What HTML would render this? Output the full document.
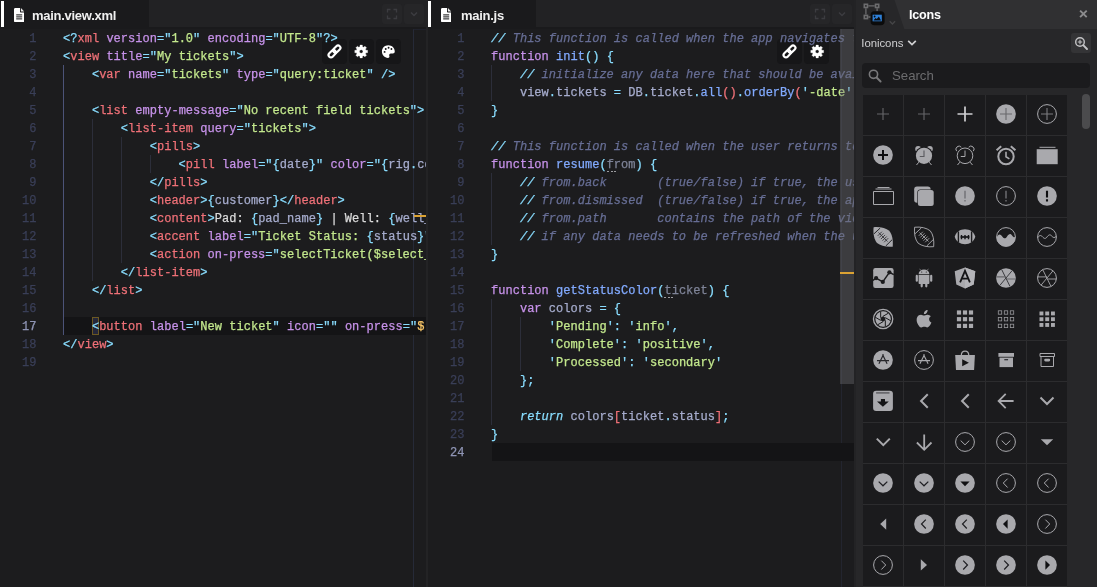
<!DOCTYPE html>
<html>
<head>
<meta charset="utf-8">
<title>Editor</title>
<style>
*{box-sizing:border-box;margin:0;padding:0}
html,body{width:1097px;height:587px;overflow:hidden;background:#232325;font-family:"Liberation Sans",sans-serif}
.pane{position:absolute;top:0;height:587px;width:426px;background:#1c1c1e;overflow:hidden}
#p1{left:0}
#p2{left:428px}
.tabbar{position:absolute;left:0;top:0;width:100%;height:28.5px;background:#1a1a1c}
.tabbar .rest{position:absolute;top:0;right:0;height:27px;background:#222224}
.tab{position:absolute;left:0;top:0;height:27px}
.tab .bar{position:absolute;left:1px;top:1px;width:3px;height:26px;background:#fff}
#p2 .tab .bar{left:0}
.tab svg.fi{position:absolute;left:13.8px;top:7.600px;width:10.300px;height:14.400px}
.tab .tl{position:absolute;left:32px;top:7.5px;font-size:13px;font-weight:bold;color:#f0f0f0;white-space:nowrap;letter-spacing:-0.28px}
.tbtn{position:absolute;top:4px;width:20px;height:20px;border-radius:3px;background:#262628}
.tbtn svg{position:absolute;left:0;top:0;width:20px;height:20px}
.code{position:absolute;z-index:2;left:0;top:30px;width:100%;font-family:"Liberation Mono",monospace;font-size:12px;letter-spacing:0.024px;line-height:18px;color:#d6d6d6;white-space:pre;-webkit-text-stroke:0.25px}
.ln{position:absolute;left:0;width:36.5px;text-align:right;color:#3a3f58;height:18px}
.ln.act{color:#8f95b5}
.l{position:absolute;left:63px;height:18px}
.hl{position:absolute;left:64px;right:0;height:18px;background:#141416;margin-top:-1px}
.ig{position:absolute;width:1px;background:#2c2e3a;margin-top:-1px}
.ig.a{background:#4c5378}
.fb{position:absolute;top:39px;width:24.6px;height:24.6px;border-radius:4px;background:#161618}
.fb svg{position:absolute;left:4.3px;top:4.300px;width:16px;height:16px}
.ruler{position:absolute;right:0;top:27px;width:13px;bottom:0}
.code,.tab .tl,#panel{will-change:transform}
/* syntax */
.p{color:#89ddff}.t{color:#f07178}.a{color:#c792ea}.s{color:#c3e88d}.v{color:#a6accd}.w{color:#dcdcdc}
.o{color:#ffcb6b}.c{color:#676e95;font-style:italic}.ci{color:#89ddff;font-style:italic}.k{color:#c792ea}.ki{color:#89ddff;font-style:italic}
.f{color:#82aaff}.r{color:#f07178}.n{color:#a6accd}.u{color:#7f8498}
.ud{position:relative}.ud:after{content:'';position:absolute;left:0;top:12.500px;width:9.200px;height:1.700px;background:repeating-linear-gradient(90deg,#9c9ca0 0,#9c9ca0 2px,transparent 2px,transparent 3.600px)}
/* panel */
#panel{position:absolute;left:856px;top:0;width:241px;height:587px;background:#272729;overflow:hidden}
#pin{position:absolute;left:.5px;top:0;width:240.500px;height:587px}
#phead{position:absolute;left:0;top:0;width:100%;height:29px;background:#303032}
.cell{position:absolute;width:40px;height:40px;background:#1b1b1d}
.cell svg{position:absolute;left:8px;top:7px;width:24px;height:24px}
</style>
</head>
<body>
<div class="pane" id="p1">
  <div class="tabbar">
    <div class="tab" style="width:149px"><div class="bar"></div>
      <svg class="fi" viewBox="0 0 10.300 14.400"><path d="M0 1.300C0 .6.600 0 1.300 0H6v3.400c0 .6.400 1 1 1h3.300v8.700c0 .7-.6 1.300-1.300 1.300H1.300C.6 14.400 0 13.800 0 13.100z" fill="#fff"/><path d="M6.900 0l3.400 3.500H7.500c-.3 0-.6-.3-.6-.6z" fill="#e8e8e8"/><rect x="2.200" y="6.400" width="6" height="1" fill="#101012"/><rect x="2.200" y="8.400" width="6" height="1" fill="#101012"/><rect x="2.200" y="10.400" width="6" height="1" fill="#101012"/></svg>
      <div class="tl">main.view.xml</div></div>
    <div class="rest" style="left:149px"></div>
    <div class="tbtn" style="left:382px"><svg viewBox="0 0 20 20"><path d="M5.500 8.500v-3h3M11.500 5.500h3v3M14.500 11.500v3h-3M8.500 14.500h-3v-3" fill="none" stroke="#3c3c40" stroke-width="1.300"/></svg></div>
    <div class="tbtn" style="left:404px"><svg viewBox="0 0 20 20"><path d="M7 8.500l3 3 3-3" fill="none" stroke="#3c3c40" stroke-width="1.500"/></svg></div>
  </div>
  <div class="code" id="c1">
<div class="hl" style="top:288px"></div>
<div style="position:absolute;left:92px;top:287px;width:7px;height:18px;border:1px solid #6b5822;background:#25273a"></div>
<div class="ig a" style="left:63.0px;top:36px;height:270px"></div>
<div class="ig" style="left:91.9px;top:90px;height:162px"></div>
<div class="ig" style="left:120.8px;top:108px;height:126px"></div>
<div class="ig" style="left:149.7px;top:126px;height:18px"></div>
<div class="ln" style="top:0px">1</div>
<div class="l" style="top:0px"><span class="p">&lt;?</span><span class="t">xml</span> <span class="a">version</span><span class="p">=&quot;</span><span class="s">1.0</span><span class="p">&quot;</span> <span class="a">encoding</span><span class="p">=&quot;</span><span class="s">UTF-8</span><span class="p">&quot;?&gt;</span></div>
<div class="ln" style="top:18px">2</div>
<div class="l" style="top:18px"><span class="p">&lt;</span><span class="t">view</span> <span class="a">title</span><span class="p">=&quot;</span><span class="s">My tickets</span><span class="p">&quot;&gt;</span></div>
<div class="ln" style="top:36px">3</div>
<div class="l" style="top:36px">    <span class="p">&lt;</span><span class="t">var</span> <span class="a">name</span><span class="p">=&quot;</span><span class="s">tickets</span><span class="p">&quot;</span> <span class="a">type</span><span class="p">=&quot;</span><span class="s">query:ticket</span><span class="p">&quot;</span> <span class="p">/&gt;</span></div>
<div class="ln" style="top:54px">4</div>
<div class="ln" style="top:72px">5</div>
<div class="l" style="top:72px">    <span class="p">&lt;</span><span class="t">list</span> <span class="a">empty-message</span><span class="p">=&quot;</span><span class="s">No recent field tickets</span><span class="p">&quot;&gt;</span></div>
<div class="ln" style="top:90px">6</div>
<div class="l" style="top:90px">        <span class="p">&lt;</span><span class="t">list-item</span> <span class="a">query</span><span class="p">=&quot;</span><span class="s">tickets</span><span class="p">&quot;&gt;</span></div>
<div class="ln" style="top:108px">7</div>
<div class="l" style="top:108px">            <span class="p">&lt;</span><span class="t">pills</span><span class="p">&gt;</span></div>
<div class="ln" style="top:126px">8</div>
<div class="l" style="top:126px">                <span class="p">&lt;</span><span class="t">pill</span> <span class="a">label</span><span class="p">=&quot;{</span><span class="v">date</span><span class="p">}&quot;</span> <span class="a">color</span><span class="p">=&quot;{</span><span class="v">rig</span><span class="p">.</span><span class="v">color</span><span class="p">}&quot;</span> <span class="p">/&gt;</span></div>
<div class="ln" style="top:144px">9</div>
<div class="l" style="top:144px">            <span class="p">&lt;/</span><span class="t">pills</span><span class="p">&gt;</span></div>
<div class="ln" style="top:162px">10</div>
<div class="l" style="top:162px">            <span class="p">&lt;</span><span class="t">header</span><span class="p">&gt;{</span><span class="v">customer</span><span class="p">}&lt;/</span><span class="t">header</span><span class="p">&gt;</span></div>
<div class="ln" style="top:180px">11</div>
<div class="l" style="top:180px">            <span class="p">&lt;</span><span class="t">content</span><span class="p">&gt;</span><span class="w">Pad: </span><span class="p">{</span><span class="v">pad_name</span><span class="p">}</span><span class="w"> | Well: </span><span class="p">{</span><span class="v">well_name</span><span class="p">}&lt;/</span><span class="t">content</span><span class="p">&gt;</span></div>
<div class="ln" style="top:198px">12</div>
<div class="l" style="top:198px">            <span class="p">&lt;</span><span class="t">accent</span> <span class="a">label</span><span class="p">=&quot;</span><span class="s">Ticket Status: </span><span class="p">{</span><span class="v">status</span><span class="p">}&quot;</span> <span class="a">color</span><span class="p">=&quot;{</span><span class="v">getStatusColor</span><span class="p">}&quot;</span></div>
<div class="ln" style="top:216px">13</div>
<div class="l" style="top:216px">            <span class="p">&lt;</span><span class="t">action</span> <span class="a">on-press</span><span class="p">=&quot;</span><span class="s">selectTicket($select_id)</span><span class="p">&quot;</span> <span class="p">/&gt;</span></div>
<div class="ln" style="top:234px">14</div>
<div class="l" style="top:234px">        <span class="p">&lt;/</span><span class="t">list-item</span><span class="p">&gt;</span></div>
<div class="ln" style="top:252px">15</div>
<div class="l" style="top:252px">    <span class="p">&lt;/</span><span class="t">list</span><span class="p">&gt;</span></div>
<div class="ln" style="top:270px">16</div>
<div class="ln act" style="top:288px">17</div>
<div class="l" style="top:288px">    <span class="p">&lt;</span><span class="t">button</span> <span class="a">label</span><span class="p">=&quot;</span><span class="s">New ticket</span><span class="p">&quot;</span> <span class="a">icon</span><span class="p">=&quot;&quot;</span> <span class="a">on-press</span><span class="p">=&quot;</span><span class="o">$</span><span class="s">.open(&#x27;new&#x27;)</span><span class="p">&quot;</span> <span class="p">/&gt;</span></div>
<div class="ln" style="top:306px">18</div>
<div class="l" style="top:306px"><span class="p">&lt;/</span><span class="t">view</span><span class="p">&gt;</span></div>
<div class="ln" style="top:324px">19</div>
</div>
<div class="ruler" style="border-left:1px solid #262a38;border-top:1px solid #20222c;top:28.500px"></div>
<div style="position:absolute;z-index:4;left:414px;top:215px;width:12px;height:2px;background:#dba233"></div>
<div class="fb" style="left:322.1px"><svg viewBox="0 0 16 16"><g transform="translate(.5 .4) rotate(-45 8 8)" fill="none" stroke="#fff" stroke-width="2.100"><rect x="0.600" y="5.600" width="8.400" height="4.800" rx="2.400"/><rect x="7" y="5.600" width="8.400" height="4.800" rx="2.400"/></g></svg></div><div class="fb" style="left:349.2px"><svg viewBox="0 0 16 16"><path fill-rule="evenodd" fill="#fff" stroke="#fff" stroke-width=".35" stroke-linejoin="round" d="M6.94 3.76 L7.03 2.11 L9.37 2.11 L9.46 3.76 L10.66 4.26 L11.90 3.15 L13.55 4.80 L12.44 6.04 L12.94 7.24 L14.59 7.33 L14.59 9.67 L12.94 9.76 L12.44 10.96 L13.55 12.20 L11.90 13.85 L10.66 12.74 L9.46 13.24 L9.37 14.89 L7.03 14.89 L6.94 13.24 L5.74 12.74 L4.50 13.85 L2.85 12.20 L3.96 10.96 L3.46 9.76 L1.81 9.67 L1.81 7.33 L3.46 7.24 L3.96 6.04 L2.85 4.80 L4.50 3.15 L5.74 4.26Z M6.40 8.50 a1.80 1.80 0 1 0 3.60 0 a1.80 1.80 0 1 0 -3.60 0Z"/></svg></div><div class="fb" style="left:376.3px"><svg viewBox="0 0 16 16"><g transform="translate(7.300 8.600) scale(.95) translate(-8 -8)"><path fill="#fff" d="M8 1.300C4.100 1.300 1.300 4.300 1.300 8c0 3.700 2.900 6.700 6.300 6.700 1.300 0 1.900-1.100 1.500-2.100-.5-1.300.1-2.700 1.700-2.700h2c1.200 0 2-.8 2-2C14.800 4.300 11.900 1.300 8 1.300z"/><g fill="#161618"><circle cx="4.100" cy="8.300" r="1"/><circle cx="5.300" cy="5.200" r="1"/><circle cx="8.300" cy="3.900" r="1"/><circle cx="11.300" cy="5.300" r="1"/></g></g></svg></div>
</div>
<div class="pane" id="p2">
  <div class="tabbar">
    <div class="tab" style="width:108px"><div class="bar"></div>
      <svg class="fi" style="left:12.800px" viewBox="0 0 10.300 14.400"><path d="M0 1.300C0 .6.600 0 1.300 0H6v3.400c0 .6.400 1 1 1h3.300v8.700c0 .7-.6 1.300-1.300 1.300H1.300C.6 14.400 0 13.800 0 13.100z" fill="#fff"/><path d="M6.900 0l3.400 3.500H7.500c-.3 0-.6-.3-.6-.6z" fill="#e8e8e8"/><rect x="2.200" y="6.400" width="6" height="1" fill="#101012"/><rect x="2.200" y="8.400" width="6" height="1" fill="#101012"/><rect x="2.200" y="10.400" width="6" height="1" fill="#101012"/></svg>
      <div class="tl" style="left:33px">main.js</div></div>
    <div class="rest" style="left:108px"></div>
    <div class="tbtn" style="left:382px"><svg viewBox="0 0 20 20"><path d="M5.500 8.500v-3h3M11.500 5.500h3v3M14.500 11.500v3h-3M8.500 14.500h-3v-3" fill="none" stroke="#3c3c40" stroke-width="1.300"/></svg></div>
    <div class="tbtn" style="left:404px"><svg viewBox="0 0 20 20"><path d="M7 8.500l3 3 3-3" fill="none" stroke="#3c3c40" stroke-width="1.500"/></svg></div>
  </div>
  <div class="code" id="c2">
<div class="hl" style="top:414px"></div>

<div class="ig" style="left:63.0px;top:36px;height:36px"></div>
<div class="ig" style="left:63.0px;top:144px;height:72px"></div>
<div class="ig" style="left:63.0px;top:270px;height:126px"></div>
<div class="ig" style="left:91.9px;top:288px;height:54px"></div>
<div class="ln" style="top:0px">1</div>
<div class="l" style="top:0px"><span class="ci">//</span><span class="c"> This function is called when the app navigates to this view</span></div>
<div class="ln" style="top:18px">2</div>
<div class="l" style="top:18px"><span class="k">function</span> <span class="f">init</span><span class="p">()</span> <span class="p">{</span></div>
<div class="ln" style="top:36px">3</div>
<div class="l" style="top:36px">    <span class="ci">//</span><span class="c"> initialize any data here that should be available</span></div>
<div class="ln" style="top:54px">4</div>
<div class="l" style="top:54px">    <span class="n">view</span><span class="p">.</span><span class="n">tickets</span><span class="p"> = </span><span class="n">DB</span><span class="p">.</span><span class="n">ticket</span><span class="p">.</span><span class="f">all</span><span class="r">()</span><span class="p">.</span><span class="f">orderBy</span><span class="r">(</span><span class="p">&#x27;</span><span class="s">-date</span><span class="p">&#x27;</span><span class="r">)</span><span class="p">;</span></div>
<div class="ln" style="top:72px">5</div>
<div class="l" style="top:72px"><span class="p">}</span></div>
<div class="ln" style="top:90px">6</div>
<div class="ln" style="top:108px">7</div>
<div class="l" style="top:108px"><span class="ci">//</span><span class="c"> This function is called when the user returns to this view</span></div>
<div class="ln" style="top:126px">8</div>
<div class="l" style="top:126px"><span class="k">function</span> <span class="f">resume</span><span class="p">(</span><span class="u ud">from</span><span class="p">)</span> <span class="p">{</span></div>
<div class="ln" style="top:144px">9</div>
<div class="l" style="top:144px">    <span class="ci">//</span><span class="c"> from.back       (true/false) if true, the user pressed back</span></div>
<div class="ln" style="top:162px">10</div>
<div class="l" style="top:162px">    <span class="ci">//</span><span class="c"> from.dismissed  (true/false) if true, the app was dismissed</span></div>
<div class="ln" style="top:180px">11</div>
<div class="l" style="top:180px">    <span class="ci">//</span><span class="c"> from.path       contains the path of the view that was left</span></div>
<div class="ln" style="top:198px">12</div>
<div class="l" style="top:198px">    <span class="ci">//</span><span class="c"> if any data needs to be refreshed when the user returns</span></div>
<div class="ln" style="top:216px">13</div>
<div class="l" style="top:216px"><span class="p">}</span></div>
<div class="ln" style="top:234px">14</div>
<div class="ln" style="top:252px">15</div>
<div class="l" style="top:252px"><span class="k">function</span> <span class="f">getStatusColor</span><span class="p">(</span><span class="u ud">ticket</span><span class="p">)</span> <span class="p">{</span></div>
<div class="ln" style="top:270px">16</div>
<div class="l" style="top:270px">    <span class="k">var</span> <span class="n">colors</span><span class="p"> = {</span></div>
<div class="ln" style="top:288px">17</div>
<div class="l" style="top:288px">        <span class="p">&#x27;</span><span class="s">Pending</span><span class="p">&#x27;: &#x27;</span><span class="s">info</span><span class="p">&#x27;,</span></div>
<div class="ln" style="top:306px">18</div>
<div class="l" style="top:306px">        <span class="p">&#x27;</span><span class="s">Complete</span><span class="p">&#x27;: &#x27;</span><span class="s">positive</span><span class="p">&#x27;,</span></div>
<div class="ln" style="top:324px">19</div>
<div class="l" style="top:324px">        <span class="p">&#x27;</span><span class="s">Processed</span><span class="p">&#x27;: &#x27;</span><span class="s">secondary</span><span class="p">&#x27;</span></div>
<div class="ln" style="top:342px">20</div>
<div class="l" style="top:342px">    <span class="p">};</span></div>
<div class="ln" style="top:360px">21</div>
<div class="ln" style="top:378px">22</div>
<div class="l" style="top:378px">    <span class="ki">return</span> <span class="n">colors</span><span class="r">[</span><span class="n">ticket</span><span class="p">.</span><span class="n">status</span><span class="r">]</span><span class="p">;</span></div>
<div class="ln" style="top:396px">23</div>
<div class="l" style="top:396px"><span class="p">}</span></div>
<div class="ln act" style="top:414px">24</div>
</div>
<div class="ruler" style="border-left:1px solid #23252f;top:28.500px"></div>
<div style="position:absolute;z-index:3;left:412px;top:29px;width:14px;height:355px;background:rgba(110,110,112,.4)"></div>
<div style="position:absolute;z-index:4;left:412px;top:272px;width:14px;height:2px;background:#dba233"></div>
<div class="fb" style="left:349.2px"><svg viewBox="0 0 16 16"><g transform="translate(.5 .4) rotate(-45 8 8)" fill="none" stroke="#fff" stroke-width="2.100"><rect x="0.600" y="5.600" width="8.400" height="4.800" rx="2.400"/><rect x="7" y="5.600" width="8.400" height="4.800" rx="2.400"/></g></svg></div><div class="fb" style="left:376.3px"><svg viewBox="0 0 16 16"><path fill-rule="evenodd" fill="#fff" stroke="#fff" stroke-width=".35" stroke-linejoin="round" d="M6.94 3.76 L7.03 2.11 L9.37 2.11 L9.46 3.76 L10.66 4.26 L11.90 3.15 L13.55 4.80 L12.44 6.04 L12.94 7.24 L14.59 7.33 L14.59 9.67 L12.94 9.76 L12.44 10.96 L13.55 12.20 L11.90 13.85 L10.66 12.74 L9.46 13.24 L9.37 14.89 L7.03 14.89 L6.94 13.24 L5.74 12.74 L4.50 13.85 L2.85 12.20 L3.96 10.96 L3.46 9.76 L1.81 9.67 L1.81 7.33 L3.46 7.24 L3.96 6.04 L2.85 4.80 L4.50 3.15 L5.74 4.26Z M6.40 8.50 a1.80 1.80 0 1 0 3.60 0 a1.80 1.80 0 1 0 -3.60 0Z"/></svg></div>
</div>
<div id="panel"><div id="pin">
  <div id="phead">
    <svg style="position:absolute;left:0;top:0" width="241" height="29" viewBox="0 0 241 29">
      <polygon points="0,0 37.500,0 47.300,29 0,29" fill="#272729"/>
      <g fill="none" stroke="#6c6c6e" stroke-width="1.600">
        <rect x="7.300" y="4.300" width="3.200" height="3.200"/><rect x="18.500" y="4.300" width="3.200" height="3.200"/><rect x="7.300" y="15.400" width="3.200" height="3.200"/>
        <path d="M11.300 5.900h6.400M8.900 8.300v6.300M20.100 8.300v3M11.300 17h2.500" stroke-width="1.300"/>
      </g>
      <rect x="13.600" y="11.200" width="14" height="14" rx="3.800" fill="#0b0b0b"/>
      <rect x="15.600" y="14.700" width="9.200" height="6.600" fill="#2f80d8"/>
      <path d="M16.400 20.400l2.200-2.300 1.200 1 2.100-2.600 2.100 3.900z" fill="#0b0b0b"/><circle cx="17.600" cy="16.500" r=".9" fill="#0b0b0b"/>
      <path d="M32.700 21.300l2.700 2.700 2.700-2.700" fill="none" stroke="#454547" stroke-width="1.300"/>
      <path d="M223.100 10.600l6.600 6.600M229.700 10.600l-6.600 6.600" stroke="#8c8c8e" stroke-width="1.900"/>
    </svg>
    <div style="position:absolute;left:52.500px;top:8px;font-size:12.600px;font-weight:bold;color:#fff;letter-spacing:-0.25px">Icons</div>
</div>
<div style="position:absolute;left:4.800px;top:37px;font-size:11.400px;color:#cfcfd1;letter-spacing:-0.05px">Ionicons</div>
<svg style="position:absolute;left:50.500px;top:39px" width="10" height="8" viewBox="0 0 10 8"><path d="M1.200 1.800l3.800 3.800 3.800-3.800" fill="none" stroke="#cfcfd1" stroke-width="1.700"/></svg>
<div style="position:absolute;left:214.500px;top:33px;width:20px;height:20px;border-radius:3px;background:#343436">
  <svg width="20" height="20" viewBox="0 0 20 20"><circle cx="9" cy="9" r="4.300" fill="none" stroke="#c4c4c6" stroke-width="1.400"/><path d="M12.200 12.200l3.800 3.800" stroke="#c4c4c6" stroke-width="1.900" stroke-linecap="round"/><path d="M6.800 9h4.400M9 6.800v4.400" stroke="#c4c4c6" stroke-width="1.100"/></svg>
</div>
<div style="position:absolute;left:5.500px;top:63px;width:227.600px;height:25px;border-radius:4px;background:#1b1b1d">
  <svg style="position:absolute;left:5px;top:5px" width="16" height="16" viewBox="0 0 16 16"><circle cx="6.500" cy="6.300" r="4.100" fill="none" stroke="#79797b" stroke-width="1.600"/><path d="M9.600 9.500l4 4" stroke="#79797b" stroke-width="1.900" stroke-linecap="round"/></svg>
  <div style="position:absolute;left:30px;top:5px;font-size:13.200px;color:#6c6c6e">Search</div>
</div>
<div id="grid" style="position:absolute;left:6.500px;top:95px;width:204px;height:492px;background:#2c2c2e">
<div class="cell" style="left:0px;top:0px"><svg viewBox="0 0 24 24"><path d="M12 6v12M6 12h12" fill="none" stroke="#66666a" stroke-width="1.1" /></svg></div>
<div class="cell" style="left:41px;top:0px"><svg viewBox="0 0 24 24"><path d="M12 6v12M6 12h12" fill="none" stroke="#66666a" stroke-width="1.1" /></svg></div>
<div class="cell" style="left:82px;top:0px"><svg viewBox="0 0 24 24"><path d="M12 4.500v15M4.500 12h15" fill="none" stroke="#cfcfd2" stroke-width="1.7" /></svg></div>
<div class="cell" style="left:123px;top:0px"><svg viewBox="0 0 24 24"><circle cx="12" cy="12" r="9.85" fill="#a9a9ad"/><path d="M12 6v12M6 12h12" fill="none" stroke="#68686c" stroke-width="1.1" /></svg></div>
<div class="cell" style="left:164px;top:0px"><svg viewBox="0 0 24 24"><circle cx="12" cy="12" r="9.4" fill="none" stroke="#a9a9ad" stroke-width="1"/><path d="M12 6v12M6 12h12" fill="none" stroke="#7c7c80" stroke-width="1.1" /></svg></div>
<div class="cell" style="left:0px;top:41px"><svg viewBox="0 0 24 24"><circle cx="12" cy="12" r="9.85" fill="#a9a9ad"/><path d="M12 7v10M7 12h10" fill="none" stroke="#0e0e10" stroke-width="2" /></svg></div>
<div class="cell" style="left:41px;top:41px"><svg viewBox="0 0 24 24"><circle cx="6.200" cy="6" r="3" fill="#a9a9ad"/><circle cx="17.800" cy="6" r="3" fill="#a9a9ad"/><circle cx="12" cy="12.800" r="9.300" fill="#1b1b1d"/><circle cx="12" cy="12.800" r="8.100" fill="#a9a9ad"/><path d="M6.800 19.200l-2.300 2.800M17.200 19.200l2.300 2.800" fill="none" stroke="#a9a9ad" stroke-width="1" /><path d="M12 7.500v6h-4.200" fill="none" stroke="#5a5a5e" stroke-width="1.1" /></svg></div>
<div class="cell" style="left:82px;top:41px"><svg viewBox="0 0 24 24"><path d="M3.700 8.200A3 3 0 0 1 8.300 4.200M20.300 8.200A3 3 0 0 0 15.700 4.200" fill="none" stroke="#a9a9ad" stroke-width="1" /><circle cx="12" cy="12.800" r="7.800" fill="none" stroke="#a9a9ad" stroke-width="1"/><path d="M6.800 19.200l-2.300 2.800M17.200 19.200l2.300 2.800" fill="none" stroke="#a9a9ad" stroke-width="1" /><path d="M12 7.500v6h-4.200" fill="none" stroke="#a9a9ad" stroke-width="1" /></svg></div>
<div class="cell" style="left:123px;top:41px"><svg viewBox="0 0 24 24"><circle cx="12" cy="13.500" r="7.700" fill="none" stroke="#a9a9ad" stroke-width="2"/><path d="M12 8.800v5l3.400 2.100" fill="none" stroke="#a9a9ad" stroke-width="1.6" /><path d="M2.600 7.300l4.600-4M21.400 7.300l-4.600-4" fill="none" stroke="#a9a9ad" stroke-width="2.1" /></svg></div>
<div class="cell" style="left:164px;top:41px"><svg viewBox="0 0 24 24"><path d="M1.700 6.200h21v15h-21z" fill="#a9a9ad" /><path d="M4.500 4.300h16" fill="none" stroke="#a9a9ad" stroke-width="1" /></svg></div>
<div class="cell" style="left:0px;top:82px"><svg viewBox="0 0 24 24"><path d="M2.500 7.500h20v13h-20z" fill="none" stroke="#a9a9ad" stroke-width="1" /><path d="M4.500 5h16M6.500 3.500h12" fill="none" stroke="#a9a9ad" stroke-width="1" /></svg></div>
<div class="cell" style="left:41px;top:82px"><svg viewBox="0 0 24 24"><rect x="2.200" y="2.400" width="16.400" height="16.400" rx="2.800" fill="#a9a9ad"/><rect x="5.300" y="5.500" width="17" height="17" rx="3" fill="#1b1b1d"/><rect x="5.900" y="6.100" width="15.800" height="15.800" rx="2.500" fill="#a9a9ad"/></svg></div>
<div class="cell" style="left:82px;top:82px"><svg viewBox="0 0 24 24"><circle cx="12" cy="12" r="9.85" fill="#a9a9ad"/><path d="M12 6.800v7.600M12 16v1.400" fill="none" stroke="#606064" stroke-width="1.1" /></svg></div>
<div class="cell" style="left:123px;top:82px"><svg viewBox="0 0 24 24"><circle cx="12" cy="12" r="9.4" fill="none" stroke="#a9a9ad" stroke-width="1"/><path d="M12 6.800v7.600M12 16v1.400" fill="none" stroke="#88888c" stroke-width="1.1" /></svg></div>
<div class="cell" style="left:164px;top:82px"><svg viewBox="0 0 24 24"><circle cx="12" cy="12" r="9.85" fill="#a9a9ad"/><path d="M12 6.800v6.800M12 15.300v2.100" fill="none" stroke="#0e0e10" stroke-width="2.1" /></svg></div>
<div class="cell" style="left:0px;top:123px"><svg viewBox="0 0 24 24"><g transform="translate(12 12) scale(.94) translate(-12 -12)"><path d="M2 1.600C8.500 .9 15 2.400 18.600 5.400C21.700 9 23 15.600 22.300 22.300C15.800 23 9.300 21.500 5.700 18.500C2.600 14.900 1.300 8.300 2 1.600z" fill="#a9a9ad" /><path d="M7.200 7.200l9.600 9.600M6.4 10.8l4.400-4.400M8.1 12.5l4.400-4.400M9.8 14.2l4.400-4.400M11.5 15.9l4.400-4.400M13.2 17.6l4.400-4.400" fill="none" stroke="#3a3a3e" stroke-width="1" /><path d="M2.400 8.600L9 2.500M15 21.500l6.700-6.600" fill="none" stroke="#1b1b1d" stroke-width="1" /></g></svg></div>
<div class="cell" style="left:41px;top:123px"><svg viewBox="0 0 24 24"><g transform="translate(12 12) scale(.94) translate(-12 -12)"><path d="M2 1.600C8.500 .9 15 2.400 18.600 5.400C21.700 9 23 15.600 22.300 22.300C15.800 23 9.300 21.500 5.700 18.500C2.600 14.900 1.300 8.300 2 1.600z" fill="none" stroke="#a9a9ad" stroke-width="1" /><path d="M7.200 7.200l9.600 9.600M6.4 10.8l4.400-4.400M8.1 12.5l4.400-4.400M9.8 14.2l4.400-4.400M11.5 15.9l4.400-4.400M13.2 17.6l4.400-4.400" fill="none" stroke="#a9a9ad" stroke-width="0.9" /><path d="M2.400 8.600L9 2.500M15 21.500l6.700-6.600" fill="none" stroke="#a9a9ad" stroke-width="1" /></g></svg></div>
<div class="cell" style="left:82px;top:123px"><svg viewBox="0 0 24 24"><path d="M1.700 11.800C3.200 7 7 4.300 12 4.300S20.800 7 22.300 11.800C20.800 16.500 17 19.300 12 19.300S3.200 16.500 1.700 11.800z" fill="#a9a9ad" /><path d="M7.600 12h8.800" fill="none" stroke="#141416" stroke-width="1.7" /><path d="M8.500 9.900v4.300M12 9.900v4.300M15.500 9.900v4.300" fill="none" stroke="#141416" stroke-width="1.4" /><path d="M5.400 6.500v11M18.600 6.500v11" fill="none" stroke="#1b1b1d" stroke-width="1.4" /></svg></div>
<div class="cell" style="left:123px;top:123px"><svg viewBox="0 0 24 24"><circle cx="12" cy="12" r="9.4" fill="none" stroke="#a9a9ad" stroke-width="1"/><clipPath id="cw"><circle cx="12" cy="12" r="9.600"/></clipPath><path d="M2.600 12.500c1.600-3.400 3.600-4 5.300-1.500s3.200 3.300 5 .8 3.200-3.800 5-1.600 2.400 2.800 3.500 1.300V23H2z" fill="#a9a9ad" clip-path="url(#cw)"/></svg></div>
<div class="cell" style="left:164px;top:123px"><svg viewBox="0 0 24 24"><circle cx="12" cy="12" r="9.4" fill="none" stroke="#a9a9ad" stroke-width="1"/><path d="M2.800 12.700c1.400-2.400 3-2.900 4.600-1s3 2.500 4.600.3 3-2.900 4.600-1.100 2.800 2.300 4.600.5" fill="none" stroke="#a9a9ad" stroke-width="1" /></svg></div>
<div class="cell" style="left:0px;top:164px"><svg viewBox="0 0 24 24"><rect x="2.200" y="2" width="20.400" height="20" rx="2.200" fill="#a9a9ad"/><path d="M1.900 14.400l3.200-2.300 6.700 3.800 6.600-9.600 4.400 2.400" fill="none" stroke="#1b1b1d" stroke-width="1.5" stroke-linejoin="round"/><circle cx="5.100" cy="12.100" r="2.100" fill="#1b1b1d"/><circle cx="11.800" cy="15.900" r="2.100" fill="#1b1b1d"/><circle cx="18.400" cy="6.300" r="2.100" fill="#1b1b1d"/></svg></div>
<div class="cell" style="left:41px;top:164px"><svg viewBox="0 0 24 24"><path d="M6.600 8.200a5.400 4.800 0 0 1 10.800 0z" fill="#a9a9ad" /><path d="M8.600 4.200l-.9-1.400M15.400 4.200l.9-1.400" fill="none" stroke="#a9a9ad" stroke-width="0.6" /><circle cx="9.700" cy="6" r=".6" fill="#1b1b1d"/><circle cx="14.300" cy="6" r=".6" fill="#1b1b1d"/><path d="M6.600 8.900h10.800v8c0 .6-.4 1-1 1H7.600c-.6 0-1-.4-1-1z" fill="#a9a9ad"/><rect x="3.700" y="8.800" width="2.200" height="7" rx="1.100" fill="#a9a9ad"/><rect x="18.100" y="8.800" width="2.200" height="7" rx="1.100" fill="#a9a9ad"/><rect x="8.600" y="16" width="2.200" height="5.400" rx="1.100" fill="#a9a9ad"/><rect x="13.200" y="16" width="2.200" height="5.400" rx="1.100" fill="#a9a9ad"/></svg></div>
<div class="cell" style="left:82px;top:164px"><svg viewBox="0 0 24 24"><path d="M12 1.600l10.300 3.600-1.600 13.400L12 22.600l-8.700-4L1.700 5.200z" fill="#a9a9ad" /><path d="M12 1.600l10.300 3.600-1.600 13.400L12 22.600z" fill="#b4b4b8" /><path d="M7.100 16.400L12 4.900l4.900 11.500M8.700 12.700h6.600" fill="none" stroke="#141416" stroke-width="1.8" stroke-linejoin="miter"/></svg></div>
<div class="cell" style="left:123px;top:164px"><svg viewBox="0 0 24 24"><circle cx="12" cy="12" r="9.85" fill="#a9a9ad"/><path d="M7.600 3.400L16 20.400M17.900 4.900L6.100 19.100" fill="none" stroke="#2e2e32" stroke-width="0.9" /><path d="M2.300 10.900H12M21.700 13H13" fill="none" stroke="#66666a" stroke-width="1.2" /></svg></div>
<div class="cell" style="left:164px;top:164px"><svg viewBox="0 0 24 24"><circle cx="12" cy="12" r="9.4" fill="none" stroke="#a9a9ad" stroke-width="1"/><path d="M7.600 3.400L16 20.400M17.900 4.900L6.100 19.100M2.300 10.900H12M21.700 13H13" fill="none" stroke="#a9a9ad" stroke-width="0.9" /></svg></div>
<div class="cell" style="left:0px;top:205px"><svg viewBox="0 0 24 24"><circle cx="12.100" cy="12" r="9.650" fill="none" stroke="#a9a9ad" stroke-width="1.300"/><circle cx="12.100" cy="12" r="7.700" fill="#a9a9ad"/><path d="M12.00 9.30L17.37 6.20M14.34 10.65L19.70 13.75M14.34 13.35L14.34 19.55M12.00 14.70L6.63 17.80M9.66 13.35L4.30 10.25M9.66 10.65L9.66 4.45" fill="none" stroke="#1b1b1d" stroke-width="1" /><path d="M12.00 9.30L14.34 10.65L14.34 13.35L12.00 14.70L9.66 13.35L9.66 10.65z" fill="#1b1b1d" /></svg></div>
<div class="cell" style="left:41px;top:205px"><svg viewBox="0 0 24 24"><path d="M15.600 3c.1 1.100-.3 2.100-1 2.900-.7.800-1.700 1.300-2.700 1.200-.1-1 .4-2.100 1-2.800C13.600 3.500 14.700 3 15.600 3zM18.900 9.200c-1.100.7-1.800 1.700-1.800 3.100 0 1.600 1 2.800 2.300 3.300-.3.900-.7 1.700-1.200 2.500-.8 1.200-1.600 2.300-2.900 2.300-1.200 0-1.600-.7-3-.7s-1.900.7-3 .7c-1.300.1-2.200-1.200-3-2.400-1.600-2.400-2.300-5.800-1-8 .8-1.400 2.200-2.200 3.700-2.200 1.200 0 2.300.8 3 .8.700 0 2.100-1 3.600-.9 1.300.1 2.500.6 3.300 1.500z" fill="#a9a9ad" /></svg></div>
<div class="cell" style="left:82px;top:205px"><svg viewBox="0 0 24 24"><rect x="3.90" y="3.40" width="4.20" height="4.20" fill="#a9a9ad"/><rect x="9.90" y="3.40" width="4.20" height="4.20" fill="#a9a9ad"/><rect x="15.90" y="3.40" width="4.20" height="4.20" fill="#a9a9ad"/><rect x="3.90" y="10.10" width="4.20" height="4.20" fill="#a9a9ad"/><rect x="9.90" y="10.10" width="4.20" height="4.20" fill="#a9a9ad"/><rect x="15.90" y="10.10" width="4.20" height="4.20" fill="#a9a9ad"/><rect x="3.90" y="16.80" width="4.20" height="4.20" fill="#a9a9ad"/><rect x="9.90" y="16.80" width="4.20" height="4.20" fill="#a9a9ad"/><rect x="15.90" y="16.80" width="4.20" height="4.20" fill="#a9a9ad"/></svg></div>
<div class="cell" style="left:123px;top:205px"><svg viewBox="0 0 24 24"><rect x="4.30" y="3.80" width="3.40" height="3.40" fill="none" stroke="#98989c" stroke-width=".8"/><rect x="10.30" y="3.80" width="3.40" height="3.40" fill="none" stroke="#98989c" stroke-width=".8"/><rect x="16.30" y="3.80" width="3.40" height="3.40" fill="none" stroke="#98989c" stroke-width=".8"/><rect x="4.30" y="10.50" width="3.40" height="3.40" fill="none" stroke="#98989c" stroke-width=".8"/><rect x="10.30" y="10.50" width="3.40" height="3.40" fill="none" stroke="#98989c" stroke-width=".8"/><rect x="16.30" y="10.50" width="3.40" height="3.40" fill="none" stroke="#98989c" stroke-width=".8"/><rect x="4.30" y="17.20" width="3.40" height="3.40" fill="none" stroke="#98989c" stroke-width=".8"/><rect x="10.30" y="17.20" width="3.40" height="3.40" fill="none" stroke="#98989c" stroke-width=".8"/><rect x="16.30" y="17.20" width="3.40" height="3.40" fill="none" stroke="#98989c" stroke-width=".8"/></svg></div>
<div class="cell" style="left:164px;top:205px"><svg viewBox="0 0 24 24"><rect x="4.50" y="4.50" width="3.90" height="3.90" fill="#a9a9ad"/><rect x="10.25" y="4.50" width="3.90" height="3.90" fill="#a9a9ad"/><rect x="16.00" y="4.50" width="3.90" height="3.90" fill="#a9a9ad"/><rect x="4.50" y="10.25" width="3.90" height="3.90" fill="#a9a9ad"/><rect x="10.25" y="10.25" width="3.90" height="3.90" fill="#a9a9ad"/><rect x="16.00" y="10.25" width="3.90" height="3.90" fill="#a9a9ad"/><rect x="4.50" y="16.00" width="3.90" height="3.90" fill="#a9a9ad"/><rect x="10.25" y="16.00" width="3.90" height="3.90" fill="#a9a9ad"/><rect x="16.00" y="16.00" width="3.90" height="3.90" fill="#a9a9ad"/></svg></div>
<div class="cell" style="left:0px;top:246px"><svg viewBox="0 0 24 24"><circle cx="12" cy="12" r="9.85" fill="#a9a9ad"/><path d="M7.900 15.700L12.500 6.600M16.100 15.700L11.500 6.600M6 12.600h12" fill="none" stroke="#26262a" stroke-width="1.2" /></svg></div>
<div class="cell" style="left:41px;top:246px"><svg viewBox="0 0 24 24"><circle cx="12" cy="12" r="9.4" fill="none" stroke="#a9a9ad" stroke-width="1"/><path d="M7.900 15.700L12.500 6.600M16.100 15.700L11.500 6.600M6 12.600h12" fill="none" stroke="#a9a9ad" stroke-width="1.1" /></svg></div>
<div class="cell" style="left:82px;top:246px"><svg viewBox="0 0 24 24"><path d="M2.200 7h19.700l-.8 14.900H3z" fill="#a9a9ad" /><path d="M8.300 7.500c0-2.800 1.500-4.400 3.750-4.400s3.750 1.600 3.750 4.400" fill="none" stroke="#a9a9ad" stroke-width="1.2" /><path d="M9.200 11.200l6.700 3.500-6.700 3.500z" fill="#141416" /></svg></div>
<div class="cell" style="left:123px;top:246px"><svg viewBox="0 0 24 24"><path d="M4.400 5h15.600v3.800H4.400z" fill="#a9a9ad" /><path d="M5.500 9.600h13.500v9.500H5.500z" fill="#a9a9ad" /><path d="M10.300 11.700h3.800" fill="none" stroke="#2a2a2e" stroke-width="1.2" /></svg></div>
<div class="cell" style="left:164px;top:246px"><svg viewBox="0 0 24 24"><path d="M5 5.500h14.500v3H5zM6 8.500h12.500v10H6z" fill="none" stroke="#a9a9ad" stroke-width="1" /><rect x="9.200" y="10.800" width="6" height="2.600" rx="1.300" fill="#a9a9ad"/></svg></div>
<div class="cell" style="left:0px;top:287px"><svg viewBox="0 0 24 24"><rect x="2.100" y="1.800" width="19.800" height="20.300" rx="3" fill="#a9a9ad"/><path d="M5.100 3.900h13.400" fill="none" stroke="#5a5a5e" stroke-width="1.4" /><path d="M9.900 10h4.100v2.600h3.800L11.900 17.800 6 12.600h3.900z" fill="#141416" /></svg></div>
<div class="cell" style="left:41px;top:287px"><svg viewBox="0 0 24 24"><path d="M15.750 5.300L9.050 12l6.700 6.700" fill="none" stroke="#a9a9ad" stroke-width="2" /></svg></div>
<div class="cell" style="left:82px;top:287px"><svg viewBox="0 0 24 24"><path d="M15.750 5.300L9.050 12l6.700 6.700" fill="none" stroke="#a9a9ad" stroke-width="2" /></svg></div>
<div class="cell" style="left:123px;top:287px"><svg viewBox="0 0 24 24"><path d="M19.600 12H5M11.700 4.900L4.600 12l7.100 7.100" fill="none" stroke="#a9a9ad" stroke-width="1.8" /></svg></div>
<div class="cell" style="left:164px;top:287px"><svg viewBox="0 0 24 24"><path d="M5.500 8.500l6.500 6.500 6.500-6.500" fill="none" stroke="#a9a9ad" stroke-width="2" /></svg></div>
<div class="cell" style="left:0px;top:328px"><svg viewBox="0 0 24 24"><path d="M5.800 8.600l6.500 6.500 6.500-6.500" fill="none" stroke="#a9a9ad" stroke-width="2" /></svg></div>
<div class="cell" style="left:41px;top:328px"><svg viewBox="0 0 24 24"><path d="M12.200 4.500v15M4.900 12.500l7.300 7.300 7.300-7.300" fill="none" stroke="#a9a9ad" stroke-width="1.8" /></svg></div>
<div class="cell" style="left:82px;top:328px"><svg viewBox="0 0 24 24"><circle cx="12" cy="12" r="9.4" fill="none" stroke="#a9a9ad" stroke-width="1"/><path d="M7.700 10.600l4.300 4.200 4.300-4.200" fill="none" stroke="#a9a9ad" stroke-width="1" /></svg></div>
<div class="cell" style="left:123px;top:328px"><svg viewBox="0 0 24 24"><circle cx="12" cy="12" r="9.4" fill="none" stroke="#a9a9ad" stroke-width="1"/><path d="M7.700 10.600l4.300 4.200 4.300-4.200" fill="none" stroke="#a9a9ad" stroke-width="1" /></svg></div>
<div class="cell" style="left:164px;top:328px"><svg viewBox="0 0 24 24"><path d="M5.800 9.200h12.400L12 15.300z" fill="#a9a9ad" /></svg></div>
<div class="cell" style="left:0px;top:369px"><svg viewBox="0 0 24 24"><circle cx="12" cy="12" r="9.85" fill="#a9a9ad"/><path d="M7.700 10.600l4.300 4.200 4.300-4.200" fill="none" stroke="#1e1e22" stroke-width="1.2" /></svg></div>
<div class="cell" style="left:41px;top:369px"><svg viewBox="0 0 24 24"><circle cx="12" cy="12" r="9.85" fill="#a9a9ad"/><path d="M7.700 10.600l4.300 4.200 4.300-4.200" fill="none" stroke="#1e1e22" stroke-width="1.2" /></svg></div>
<div class="cell" style="left:82px;top:369px"><svg viewBox="0 0 24 24"><circle cx="12" cy="12" r="9.85" fill="#a9a9ad"/><path d="M7.400 10.400h9.200L12 15.300z" fill="#101012" /></svg></div>
<div class="cell" style="left:123px;top:369px"><svg viewBox="0 0 24 24"><circle cx="12" cy="12" r="9.4" fill="none" stroke="#a9a9ad" stroke-width="1"/><path d="M13.600 7.700L9.300 12l4.300 4.500" fill="none" stroke="#a9a9ad" stroke-width="1" /></svg></div>
<div class="cell" style="left:164px;top:369px"><svg viewBox="0 0 24 24"><circle cx="12" cy="12" r="9.4" fill="none" stroke="#a9a9ad" stroke-width="1"/><path d="M13.600 7.700L9.300 12l4.300 4.500" fill="none" stroke="#a9a9ad" stroke-width="1" /></svg></div>
<div class="cell" style="left:0px;top:410px"><svg viewBox="0 0 24 24"><path d="M15.200 6.500v11.300L9.200 12z" fill="#a9a9ad" /></svg></div>
<div class="cell" style="left:41px;top:410px"><svg viewBox="0 0 24 24"><circle cx="12" cy="12" r="9.85" fill="#a9a9ad"/><path d="M13.800 7.700L9.500 12l4.300 4.500" fill="none" stroke="#1e1e22" stroke-width="1.2" /></svg></div>
<div class="cell" style="left:82px;top:410px"><svg viewBox="0 0 24 24"><circle cx="12" cy="12" r="9.85" fill="#a9a9ad"/><path d="M13.800 7.700L9.500 12l4.300 4.500" fill="none" stroke="#1e1e22" stroke-width="1.2" /></svg></div>
<div class="cell" style="left:123px;top:410px"><svg viewBox="0 0 24 24"><circle cx="12" cy="12" r="9.85" fill="#a9a9ad"/><path d="M13.600 7.500v9.200L9 12z" fill="#101012" /></svg></div>
<div class="cell" style="left:164px;top:410px"><svg viewBox="0 0 24 24"><circle cx="12" cy="12" r="9.4" fill="none" stroke="#a9a9ad" stroke-width="1"/><path d="M10.400 7.700l4.300 4.300-4.300 4.500" fill="none" stroke="#a9a9ad" stroke-width="1" /></svg></div>
<div class="cell" style="left:0px;top:451px"><svg viewBox="0 0 24 24"><circle cx="12" cy="12" r="9.4" fill="none" stroke="#a9a9ad" stroke-width="1"/><path d="M10.400 7.700l4.300 4.300-4.300 4.500" fill="none" stroke="#a9a9ad" stroke-width="1" /></svg></div>
<div class="cell" style="left:41px;top:451px"><svg viewBox="0 0 24 24"><path d="M8.800 6.200v11.400l6.200-5.700z" fill="#a9a9ad" /></svg></div>
<div class="cell" style="left:82px;top:451px"><svg viewBox="0 0 24 24"><circle cx="12" cy="12" r="9.85" fill="#a9a9ad"/><path d="M10.200 7.700l4.300 4.300-4.300 4.500" fill="none" stroke="#1e1e22" stroke-width="1.2" /></svg></div>
<div class="cell" style="left:123px;top:451px"><svg viewBox="0 0 24 24"><circle cx="12" cy="12" r="9.85" fill="#a9a9ad"/><path d="M10.200 7.700l4.300 4.300-4.300 4.500" fill="none" stroke="#1e1e22" stroke-width="1.2" /></svg></div>
<div class="cell" style="left:164px;top:451px"><svg viewBox="0 0 24 24"><circle cx="12" cy="12" r="9.85" fill="#a9a9ad"/><path d="M10.400 7.500v9.200L15 12z" fill="#101012" /></svg></div>
</div>
<div style="position:absolute;left:225.300px;top:94px;width:8px;height:35px;border-radius:4px;background:#4b4b4d"></div>

</div></div>
</body>
</html>
